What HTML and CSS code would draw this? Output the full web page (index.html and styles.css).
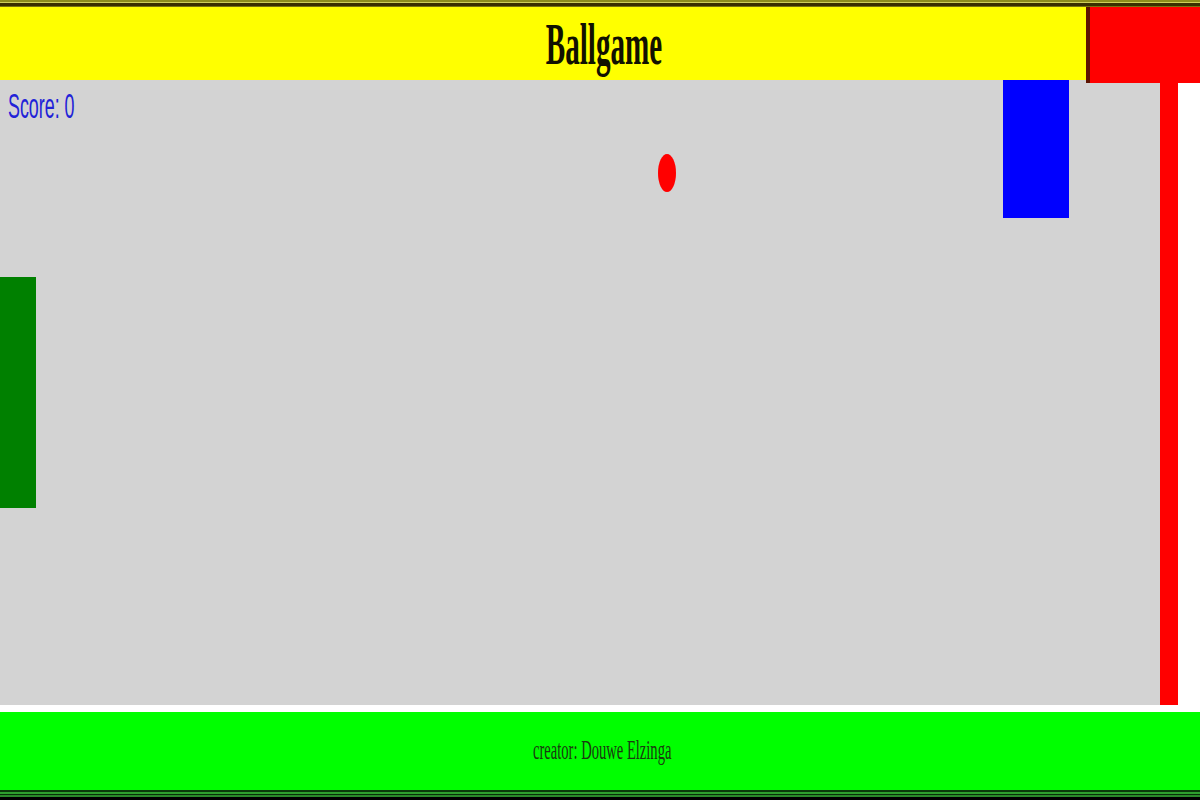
FILE: index.html
```html
<!DOCTYPE html>
<html lang="en">
<head>
<meta charset="utf-8">
<title>Ballgame</title>
<link rel="stylesheet" href="styles.css">
</head>
<body>
<div class="stripe-top"></div>
<header class="header">
  <h1 class="title"><span class="squeeze">Ballgame</span></h1>
  <div class="corner"></div>
</header>
<main class="main">
  <div class="field">
    <div class="score"><span class="squeeze-left">Score: 0</span></div>
    <div class="ball"></div>
    <div class="enemy"></div>
    <div class="paddle"></div>
  </div>
  <div class="wall"></div>
  <div class="side"></div>
</main>
<div class="gap"></div>
<footer class="footer">
  <span class="squeeze-foot">creator: Douwe Elzinga</span>
</footer>
<div class="stripe-bottom"></div>
</body>
</html>
```

FILE: styles.css
```css
html, body {
  margin: 0;
  padding: 0;
  background: #ffffff;
  width: 1200px;
  height: 800px;
  overflow: hidden;
}

.stripe-top {
  height: 7px;
  background: linear-gradient(#8e8e1c 0 2px, #cfcf5a 2px 3px, #3a3000 3px 6px, #7a7410 6px 7px);
}

.header {
  position: relative;
  height: 73px;
  background: #ffff00;
  text-align: center;
}

.title {
  margin: 0;
  padding-left: 8px;
  font-family: "Liberation Serif", "Times New Roman", serif;
  font-weight: bold;
  font-size: 60px;
  line-height: 74px;
  color: #111100;
}

.squeeze {
  display: inline-block;
  transform: scaleX(0.485);
  transform-origin: center;
}

.squeeze-left {
  display: inline-block;
  transform: scaleX(0.51);
  transform-origin: left center;
}

.squeeze-foot {
  display: inline-block;
  transform: scaleX(0.54);
  transform-origin: center;
}

.corner {
  position: absolute;
  top: 0;
  right: 0;
  width: 110px;
  height: 76px;
  background: #ff0000;
  border-left: 4px solid #5c1200;
  z-index: 2;
}

.main {
  display: flex;
  height: 625px;
}

.field {
  position: relative;
  width: 1160px;
  background: #d3d3d3;
}

.score {
  position: absolute;
  left: 8px;
  top: 8px;
  font-family: "Liberation Sans", Arial, sans-serif;
  font-size: 35px;
  line-height: 35px;
  color: #2222d8;
}

.ball {
  position: absolute;
  left: 658px;
  top: 74px;
  width: 18px;
  height: 38px;
  border-radius: 50%;
  background: #ff0000;
}

.enemy {
  position: absolute;
  left: 1003px;
  top: 0;
  width: 66px;
  height: 138px;
  background: #0000ff;
}

.paddle {
  position: absolute;
  left: 0;
  top: 197px;
  width: 36px;
  height: 231px;
  background: #008000;
}

.wall {
  width: 18px;
  background: #ff0000;
}

.side {
  flex: 1;
  background: #ffffff;
}

.gap {
  height: 7px;
  background: #ffffff;
}

.footer {
  height: 78px;
  padding-left: 4px;
  background: #00ff00;
  text-align: center;
  font-family: "Liberation Serif", "Times New Roman", serif;
  font-size: 27px;
  line-height: 76px;
  color: #1a3a10;
}

.stripe-bottom {
  height: 10px;
  background: linear-gradient(#0a3a0a 0 2px, #2ea02e 2px 4px, #083008 4px 5px, #2a8a2a 5px 7px, #000000 7px 10px);
}
```
